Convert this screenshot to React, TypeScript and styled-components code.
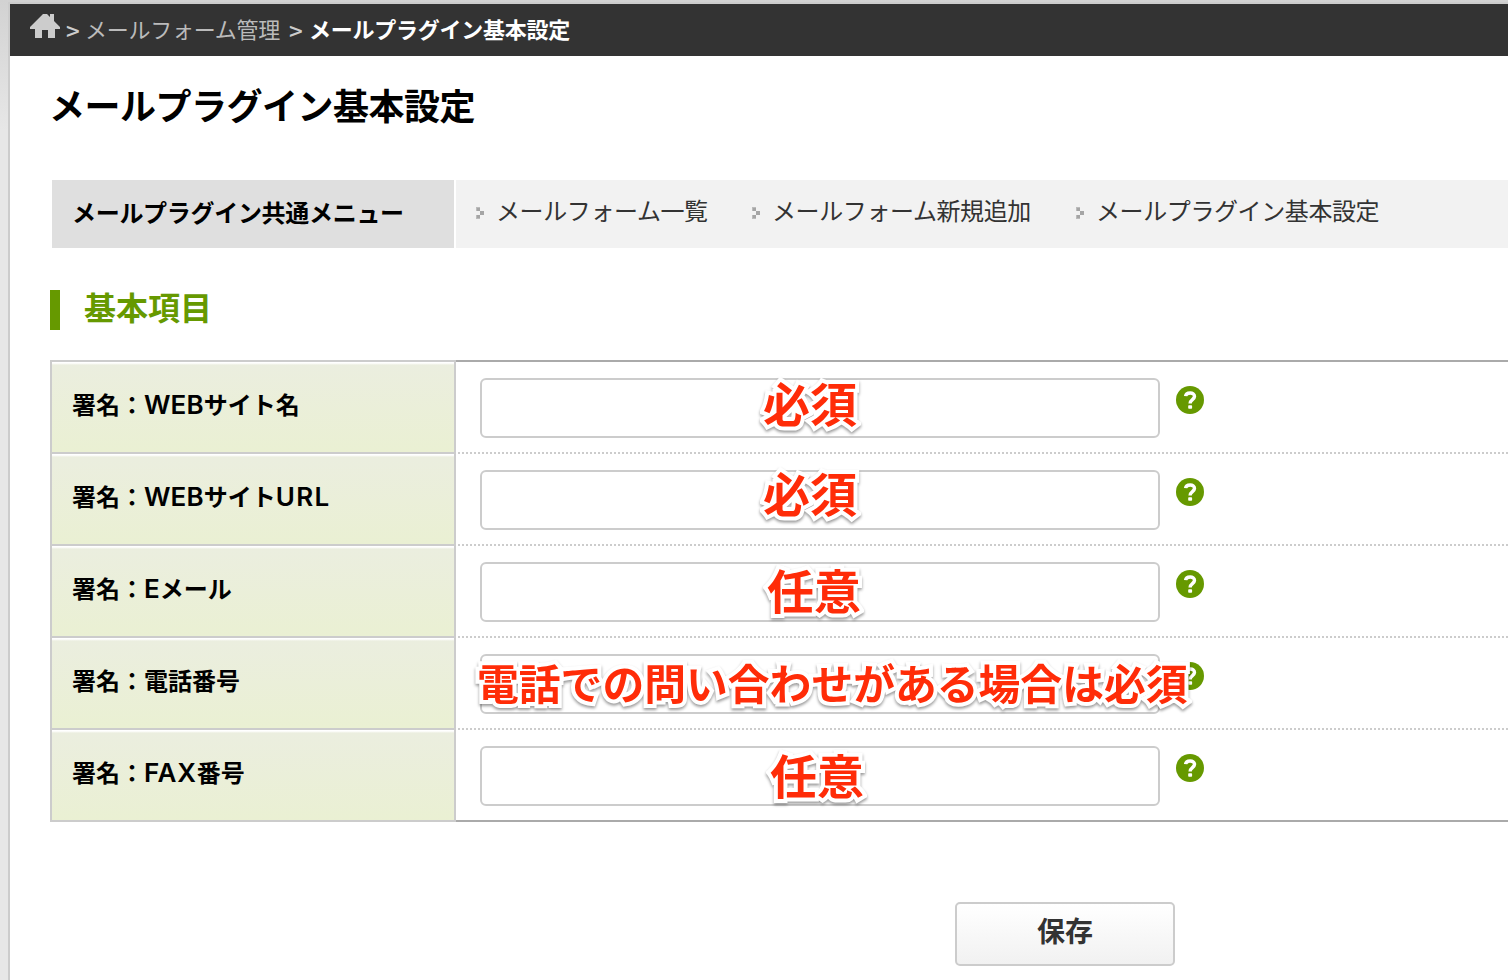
import React from 'react';
import styled, { createGlobalStyle } from 'styled-components';

const GlobalStyle = createGlobalStyle`
  * { box-sizing: border-box; }
  body {
    margin: 0;
    overflow: hidden;
    background: #fff;
    color: #000;
    font-family: "Noto Sans CJK JP", sans-serif;
  }
`;

const Page = styled.div`
  width: 1508px;
  height: 980px;
  padding: 4px 0 0 8px;
  overflow: hidden;
  background: linear-gradient(#d2d2d2, #e7e7e7 130px);
`;

const Sheet = styled.div`
  height: 976px;
  border-left: 2px solid #ccc;
  background: #fff;
  box-shadow: 0 -2px 0 #ccc;
`;

const Breadcrumb = styled.nav`
  display: flex;
  height: 52px;
  padding-left: 20px;
  background: #333;
  color: #ccc;
  font-size: 22px;
  line-height: 48px;
  white-space: pre;
`;

const HomeIcon = styled.svg`
  flex: none;
  width: 30px;
  height: 26px;
  margin-top: 9px;
`;

const Separator = styled.span<{ $width: number; $pad: number }>`
  flex: none;
  width: ${(p) => p.$width}px;
  padding-left: ${(p) => p.$pad}px;
  font-size: 24px;
  font-weight: 500;
  line-height: 52px;
`;

const Crumb = styled.span<{ $current?: boolean; $width?: number }>`
  flex: none;
  width: ${(p) => (p.$width ? `${p.$width}px` : 'auto')};
  color: ${(p) => (p.$current ? '#fff' : '#bbb')};
  font-weight: ${(p) => (p.$current ? 700 : 400)};
  letter-spacing: -0.25px;
`;

const Content = styled.main`
  padding-left: 40px;
`;

const Title = styled.h1`
  height: 124px;
  margin: 0;
  padding-top: 22px;
  font-size: 36px;
  line-height: 52px;
  letter-spacing: -0.5px;
  text-indent: -1px;
`;

const SubMenu = styled.div`
  display: flex;
  gap: 2px;
  height: 68px;
  margin-left: 2px;
`;

const SubMenuTitle = styled.div`
  flex: none;
  width: 402px;
  padding-left: 20px;
  background: #dfdfdf;
  font-size: 24px;
  font-weight: 700;
  line-height: 64px;
  letter-spacing: -0.3px;
`;

const SubMenuLinks = styled.div`
  display: flex;
  flex: 1;
  padding-left: 20px;
  background: #f2f2f2;
`;

const SubMenuLink = styled.a<{ $width: number }>`
  display: flex;
  flex: none;
  width: ${(p) => p.$width}px;
  color: #333;
  font-size: 24px;
  line-height: 59px;
  letter-spacing: -0.4px;
  white-space: nowrap;
`;

const Marker = styled.svg`
  width: 8px;
  height: 12px;
  margin: 27px 12px 0 0;
`;

const SectionTitle = styled.h2`
  height: 40px;
  margin: 42px 0 30px;
  padding-left: 24px;
  border-left: 10px solid #690;
  color: #690;
  font-size: 32px;
  line-height: 33px;
`;

const Form = styled.div`
  border-left: 2px solid #ccc;
`;

const Row = styled.div`
  display: flex;
  height: 92px;
  &:last-child { height: 94px; }
`;

const LabelCell = styled.div`
  flex: none;
  width: 404px;
  padding-left: 20px;
  border-top: 2px solid #ccc;
  border-right: 2px solid #ccc;
  background: linear-gradient(#fff 0 1px, #f6f7f0 2px, #ebeedf 3px, #eaf0d3);
  font-size: 24px;
  font-weight: 700;
  line-height: 83px;
  white-space: nowrap;
  ${Row}:last-child & { border-bottom: 2px solid #ccc; }
`;

const Latin = styled.span<{ $spacing?: number }>`
  font-family: Inter, "Liberation Sans", sans-serif;
  font-size: 26px;
  font-weight: 600;
  line-height: 1;
  letter-spacing: ${(p) => p.$spacing ?? 0.1}px;
`;

const FieldCell = styled.div`
  position: relative;
  display: flex;
  flex: 1;
  padding: 18px 0 0 24px;
  background: repeating-linear-gradient(90deg, transparent 0 2px, #ccc 2px 4px) 0 0 / 100% 2px no-repeat;
  ${Row}:first-child & { background: linear-gradient(#aaa, #aaa) 0 0 / 100% 2px no-repeat; }
  ${Row}:last-child & { border-bottom: 2px solid #aaa; }
`;

const Input = styled.input`
  width: 680px;
  height: 60px;
  padding: 0 10px;
  border: 2px solid #ccc;
  border-radius: 6px;
  background: #fff;
  font-size: 24px;
`;

const HelpIcon = styled.svg`
  width: 28px;
  height: 28px;
  margin: 8px 0 0 16px;
`;

const Note = styled.span<{ $x: number; $y: number; $size: number }>`
  position: absolute;
  left: ${(p) => p.$x}px;
  top: ${(p) => p.$y}px;
  color: #ff2c08;
  font-size: ${(p) => p.$size}px;
  font-weight: 700;
  line-height: 60px;
  white-space: nowrap;
  -webkit-text-stroke: 8px #fff;
  paint-order: stroke fill;
  stroke-linejoin: round;
  filter: drop-shadow(0 2px 1.5px rgba(0, 0, 0, 0.4));
`;

const Actions = styled.div`
  padding: 80px 0 0 905px;
`;

const SaveButton = styled.button`
  display: block;
  width: 220px;
  height: 64px;
  padding: 0 0 8px;
  border: 2px solid #ccc;
  border-radius: 5px;
  background: linear-gradient(#fff, #f1f1f1);
  color: #333;
  font: 700 28px/50px "Noto Sans CJK JP", sans-serif;
`;

const links = [
  { text: 'メールフォーム一覧', width: 276 },
  { text: 'メールフォーム新規追加', width: 324 },
  { text: 'メールプラグイン基本設定', width: 330 },
];

const fields = [
  { id: 'site-name', label: <>署名：<Latin>WEB</Latin>サイト名</>, note: '必須', x: 307, y: 12, size: 47 },
  { id: 'site-url', label: <>署名：<Latin>WEB</Latin>サイト<Latin $spacing={1.4}>URL</Latin></>, note: '必須', x: 307, y: 10, size: 47 },
  { id: 'email', label: <>署名：<Latin>E</Latin>メール</>, note: '任意', x: 311, y: 15, size: 47 },
  { id: 'tel', label: <>署名：電話番号</>, note: '電話での問い合わせがある場合は必須', x: 21, y: 16, size: 41.8 },
  { id: 'fax', label: <>署名：<Latin $spacing={0.7}>FAX</Latin>番号</>, note: '任意', x: 314, y: 16, size: 47 },
];

const Help = () => (
  <HelpIcon viewBox="0 0 28 28">
    <circle cx="14" cy="14" r="14" fill="#690" />
    <path d="M9.6 10.2C10 5.9 18.6 5.8 18.5 10.4C18.4 13.7 14.1 13.6 14.1 17.6" fill="none" stroke="#fff" strokeWidth="3.4" />
    <rect x="12.2" y="19.2" width="3.9" height="3.6" rx="0.8" fill="#fff" />
  </HelpIcon>
);

export default function App() {
  return (
    <>
      <GlobalStyle />
      <Page>
        <Sheet>
          <Breadcrumb>
            <HomeIcon viewBox="0 0 30 26">
              <path d="M13 1H17L20 4V1H24V8L30 14V16H25V25H18V17H12V25H5V16H0V14Z" fill="#ccc" />
            </HomeIcon>
            <Separator $width={25} $pad={6}>&gt;</Separator>
            <Crumb $width={203}>メールフォーム管理</Crumb>
            <Separator $width={21} $pad={1}>&gt;</Separator>
            <Crumb $current>メールプラグイン基本設定</Crumb>
          </Breadcrumb>
          <Content>
            <Title>メールプラグイン基本設定</Title>
            <SubMenu>
              <SubMenuTitle>メールプラグイン共通メニュー</SubMenuTitle>
              <SubMenuLinks>
                {links.map((link) => (
                  <SubMenuLink key={link.text} $width={link.width}>
                    <Marker viewBox="0 0 8 12">
                      <path d="M0 0H4V4H0ZM0 8H4V12H0Z" fill="#bbb" />
                      <path d="M1 1H4V4H1ZM1 8H4V11H1ZM4 4H8V8H4Z" fill="#a5a5a5" />
                    </Marker>
                    {link.text}
                  </SubMenuLink>
                ))}
              </SubMenuLinks>
            </SubMenu>
            <SectionTitle>基本項目</SectionTitle>
            <Form>
              {fields.map((field) => (
                <Row key={field.id}>
                  <LabelCell>{field.label}</LabelCell>
                  <FieldCell>
                    <Input type="text" />
                    <Help />
                    <Note $x={field.x} $y={field.y} $size={field.size}>{field.note}</Note>
                  </FieldCell>
                </Row>
              ))}
            </Form>
            <Actions>
              <SaveButton type="button">保存</SaveButton>
            </Actions>
          </Content>
        </Sheet>
      </Page>
    </>
  );
}
